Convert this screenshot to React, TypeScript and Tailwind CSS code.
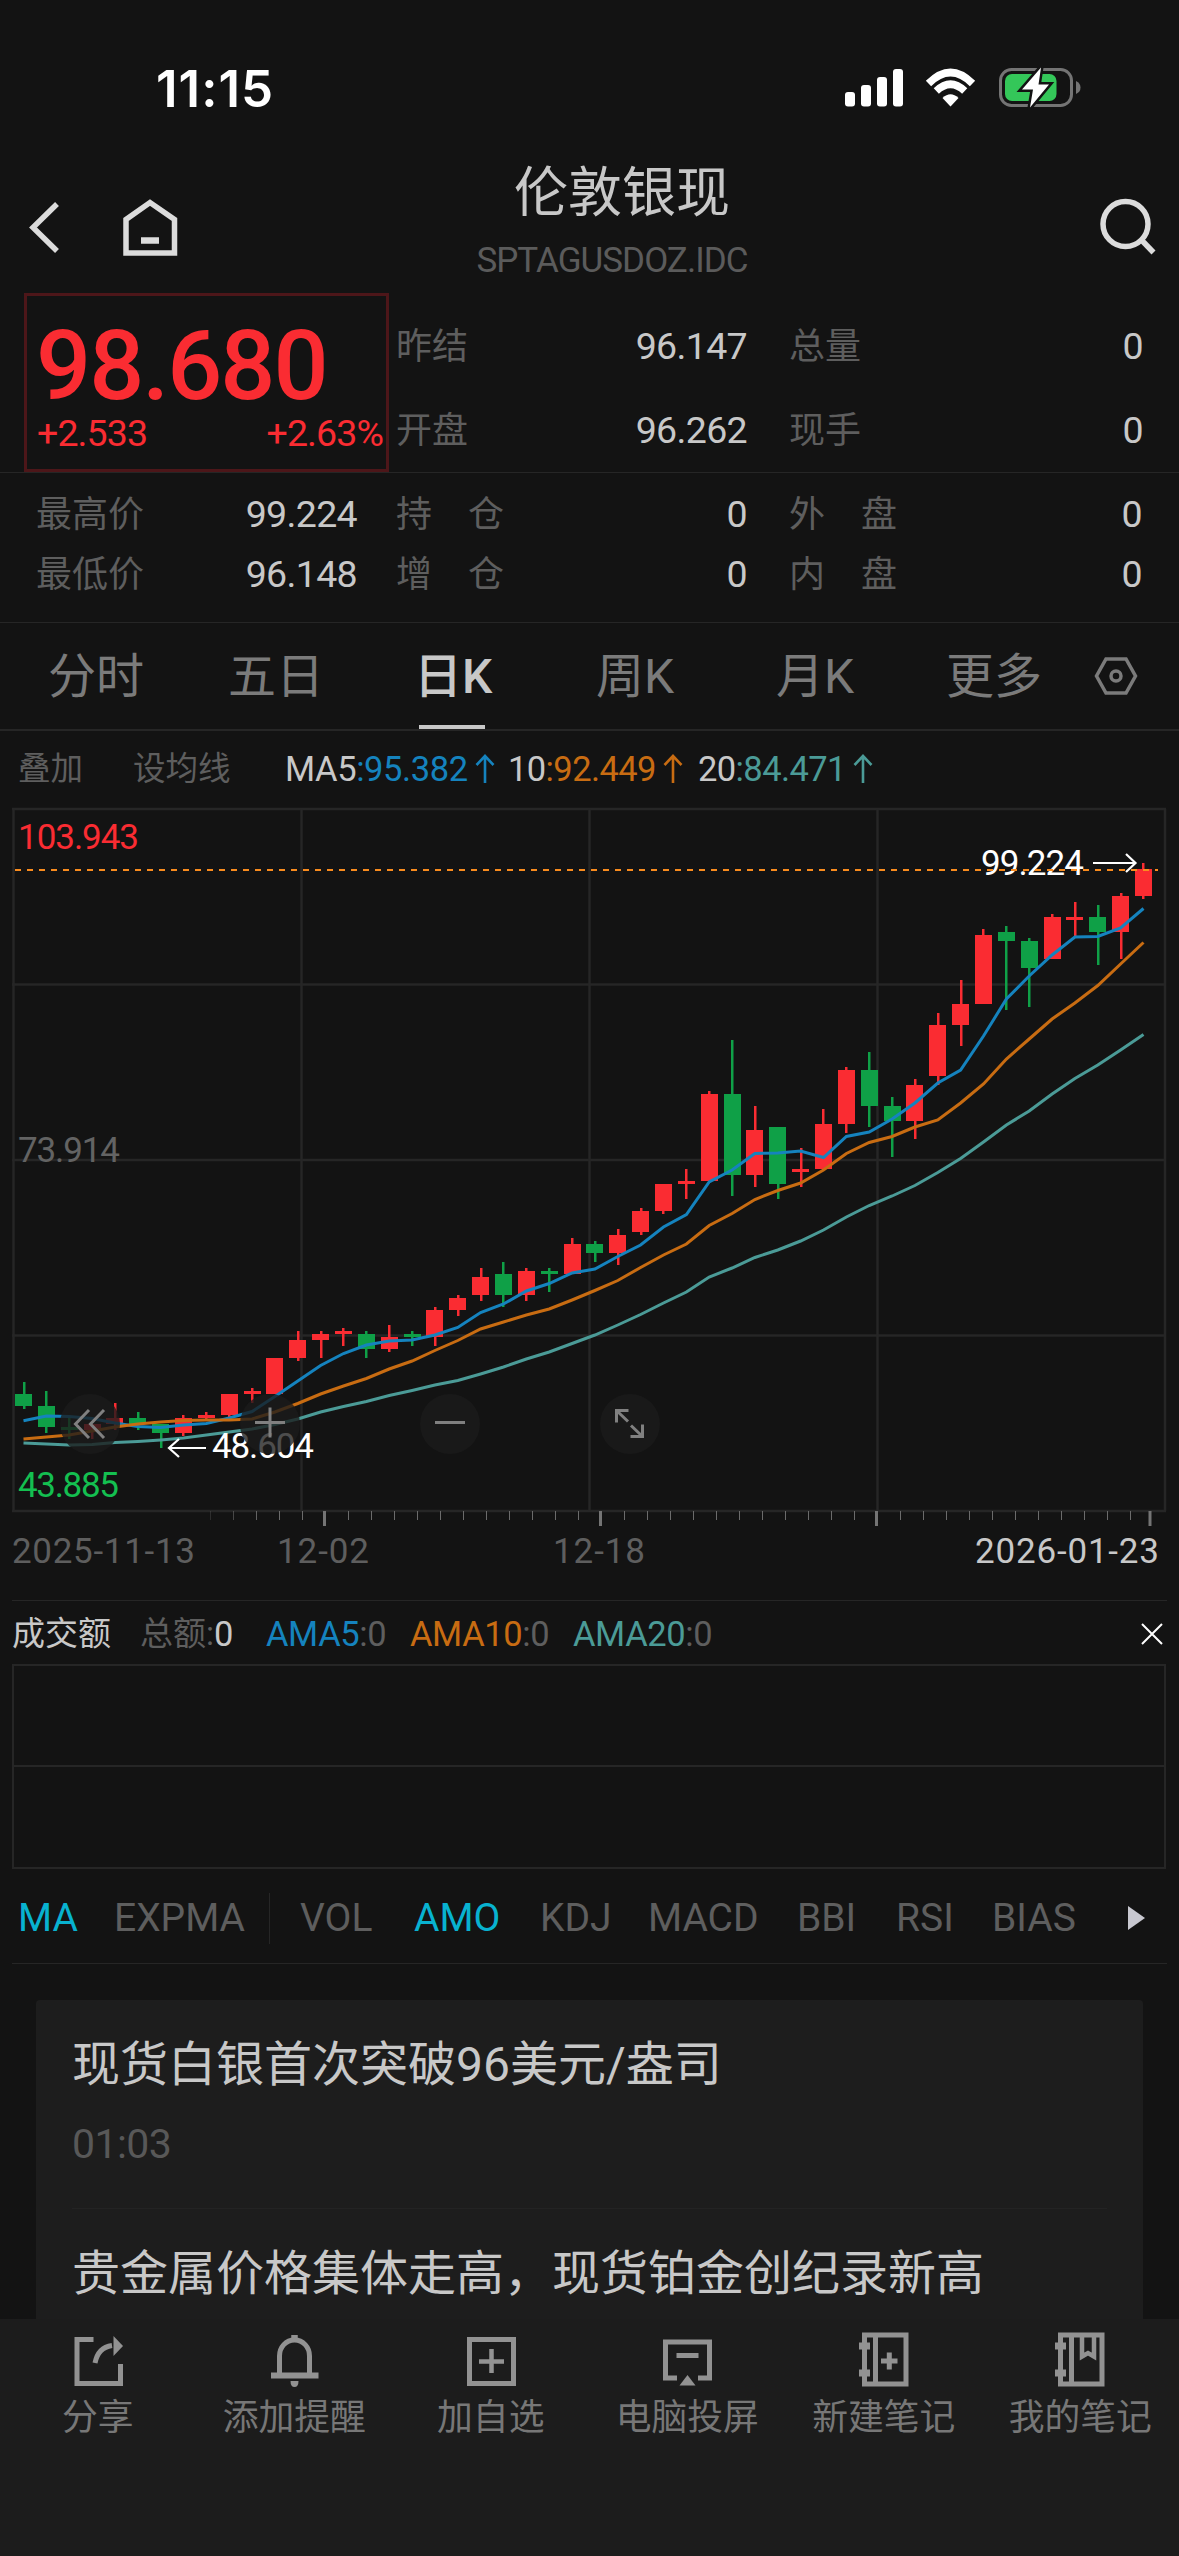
import React from "react";

type Candle = [dir: 0 | 1, top: number, bottom: number, high: number, low: number];

// Each entry: 1 = rising / 0 = falling, body top, body bottom, wick top, wick bottom
const candles: Candle[] = [
  [0, 1394, 1406, 1382, 1409],
  [0, 1406, 1427, 1391, 1433],
  [0, 1427, 1430, 1418, 1439],
  [1, 1424, 1430, 1424, 1439],
  [1, 1418, 1424, 1403, 1430],
  [0, 1418, 1424, 1412, 1430],
  [0, 1424, 1433, 1424, 1448],
  [1, 1418, 1433, 1415, 1436],
  [1, 1415, 1418, 1412, 1419],
  [1, 1394, 1415, 1394, 1418],
  [1, 1391, 1394, 1388, 1403],
  [1, 1358, 1394, 1358, 1394],
  [1, 1340, 1358, 1331, 1361],
  [1, 1334, 1340, 1331, 1358],
  [1, 1331, 1334, 1328, 1346],
  [0, 1334, 1349, 1331, 1358],
  [1, 1337, 1349, 1325, 1352],
  [0, 1334, 1337, 1331, 1346],
  [1, 1310, 1337, 1307, 1346],
  [1, 1298, 1310, 1295, 1316],
  [1, 1277, 1295, 1268, 1301],
  [0, 1274, 1295, 1262, 1307],
  [1, 1271, 1295, 1268, 1301],
  [0, 1271, 1274, 1268, 1292],
  [1, 1244, 1274, 1238, 1274],
  [0, 1244, 1253, 1241, 1262],
  [1, 1235, 1253, 1229, 1265],
  [1, 1211, 1232, 1208, 1235],
  [1, 1184, 1211, 1184, 1214],
  [1, 1181, 1184, 1169, 1199],
  [1, 1094, 1181, 1091, 1181],
  [0, 1094, 1175, 1040, 1196],
  [1, 1130, 1175, 1106, 1187],
  [0, 1127, 1184, 1127, 1199],
  [1, 1169, 1172, 1148, 1187],
  [1, 1124, 1169, 1109, 1169],
  [1, 1070, 1124, 1067, 1133],
  [0, 1070, 1106, 1052, 1127],
  [0, 1106, 1121, 1097, 1157],
  [1, 1085, 1121, 1079, 1139],
  [1, 1025, 1076, 1013, 1085],
  [1, 1004, 1025, 980, 1046],
  [1, 935, 1004, 929, 1004],
  [0, 932, 941, 926, 1010],
  [0, 941, 968, 938, 1007],
  [1, 917, 959, 914, 959],
  [1, 917, 920, 902, 936],
  [0, 917, 932, 905, 965],
  [1, 896, 932, 893, 959],
  [1, 869, 896, 863, 899],
];

const ma5 = [
  1420.7, 1416, 1416.5, 1418.5, 1423, 1426.5, 1427.5, 1425, 1423.5, 1418, 1411.5, 1396.5, 1381, 1365.5, 1353.5, 1345,
  1341, 1340, 1335, 1327.5, 1312.5, 1304, 1291, 1283.5, 1273, 1269, 1256.5, 1245, 1227, 1214.5, 1182, 1170, 1153.5,
  1153, 1151, 1157.5, 1136.5, 1132, 1119, 1103, 1083, 1070, 1036, 999, 976, 955, 937, 936.5, 928, 908.5,
];
const ma10 = [
  1439, 1437, 1435, 1431, 1427, 1424, 1422, 1420.5, 1420, 1420, 1419, 1412, 1403.5, 1394, 1386, 1378.5, 1369, 1361,
  1350.5, 1340.5, 1329, 1322, 1315, 1309, 1300, 1290.5, 1280.5, 1267.5, 1255, 1244, 1225.5, 1213.5, 1199.5, 1190.5,
  1183, 1170, 1153.5, 1142.5, 1136.5, 1127, 1120, 1103, 1084, 1059, 1039, 1019, 1003, 985.5, 964, 942.5,
];
const ma20 = [
  1443, 1444, 1445, 1444.5, 1442.5, 1441.5, 1440, 1438, 1435, 1432, 1429, 1424.5, 1419, 1412, 1406.5, 1401.5, 1395.5,
  1390.5, 1385, 1380.5, 1374, 1367, 1359, 1352, 1343.5, 1335, 1325, 1314.5, 1303, 1292, 1277, 1268, 1257.5, 1250,
  1241, 1230, 1217, 1205.5, 1196, 1185.5, 1172.5, 1158.5, 1142, 1125, 1111, 1094, 1078.5, 1065, 1050, 1034.5,
];

const cx = (i: number) => 23.5 + i * 22.857;
const line = (ys: number[]) => ys.map((y, i) => `${cx(i).toFixed(1)},${y}`).join(" ");

const RED = "#fa2c32";
const GREEN = "#0fa047";

function StatusBar() {
  return (
    <div className="flex h-[150px] items-start justify-between pl-[156px] pr-[98px] pt-[60px]">
      <div className="font-['Inter'] text-[51px] font-semibold leading-[58px] tracking-[1px] text-white">11:15</div>
      <svg className="mt-[6px]" width="238" height="44" viewBox="844 66 238 44">
        <g fill="#fff">
          <rect x="846" y="92" width="10" height="14.5" rx="3" />
          <rect x="862" y="85" width="10" height="21.5" rx="3" />
          <rect x="878" y="77" width="10" height="29.5" rx="3" />
          <rect x="894" y="69" width="10" height="37.5" rx="3" />
          <path d="M951.500 106.500 L943.500 98 Q951.500 90.500 959.500 98 Z" />
        </g>
        <g fill="none" stroke="#fff" strokeWidth="7.500">
          <path d="M929.500 83.500 Q951.500 61.500 973.500 83.500" />
          <path d="M937.300 91 Q951.500 77.500 965.700 91" />
        </g>
        <rect x="1001.500" y="69.500" width="71" height="36" rx="11" fill="none" stroke="#747474" strokeWidth="3" />
        <path d="M1077 81 Q1081.500 83 1081.500 87.500 Q1081.500 92 1077 94 Z" fill="#747474" />
        <rect x="1006" y="74" width="51.500" height="27" rx="7" fill="#34c759" />
        <path
          d="M1042 67.500 L1023 89.500 H1034 L1031 107.500 L1050 84.500 H1039.500 Z"
          fill="#fff"
          stroke="#131313"
          strokeWidth="5"
          paintOrder="stroke"
        />
      </svg>
    </div>
  );
}

function Header() {
  return (
    <header className="flex h-[143px] items-start justify-between pl-[24px] pr-[22px]">
      <div className="flex w-[374px] pt-[46px]">
        <svg width="160" height="64" viewBox="24 196 160 64" fill="none" stroke="#dcdcdc">
          <path d="M57 204 L33 227.500 L57 251" strokeWidth="5.500" />
          <path d="M126 253 V219.500 L150 202.500 L174.500 219.500 V253 Z" strokeWidth="5.500" />
          <path d="M141 240.500 H159" strokeWidth="6.500" />
        </svg>
      </div>
      <div className="flex flex-col items-center">
        <h1 className="mt-[13px] pl-[19px] text-[54px] leading-[62px] text-[#c8c8c8]">伦敦银现</h1>
        <p className="mt-[16px] pr-px text-[35px] leading-[40px] tracking-[-0.95px] text-[#5b5b5b]">SPTAGUSDOZ.IDC</p>
      </div>
      <div className="flex w-[330px] justify-end pt-[46px]">
        <svg width="60" height="64" viewBox="1097 196 60 64" fill="none" stroke="#dcdcdc" strokeWidth="5.500">
          <circle cx="1125.500" cy="224" r="22.500" />
          <path d="M1141.500 240 L1153.500 252.500" />
        </svg>
      </div>
    </header>
  );
}

function Pair({ label, value }: { label: string; value: string }) {
  return (
    <>
      <span className="whitespace-pre pt-px text-[#5e5e5e]">{label}</span>
      <span className="text-right text-[37.5px] tracking-[-0.65px] text-[#c8c8c8]">{value}</span>
    </>
  );
}

function Quote() {
  return (
    <section className="text-[36px] leading-[60px]">
      <div className="flex h-[180px] border-b border-[#262626] pl-[24px]">
        <div className="flex h-[179px] w-[365px] flex-col border-[3px] border-[#4d1619] pl-[9px] pr-[3px] text-[#fa2c32]">
          <div className="mt-[30px] text-[97px] font-medium leading-[80px] tracking-[-2px]">98.680</div>
          <div className="mt-[3px] flex justify-between pl-px text-[37.5px] leading-[48px] tracking-[-0.9px]">
            <span>+2.533</span>
            <span>+2.63%</span>
          </div>
        </div>
        <div className="ml-[7px] grid h-[179px] grid-cols-[110px_241px_42px_110px_244px] grid-rows-[84px_84px] content-start items-center pt-[11px]">
          <Pair label="昨结" value="96.147" />
          <span />
          <Pair label="总量" value="0" />
          <Pair label="开盘" value="96.262" />
          <span />
          <Pair label="现手" value="0" />
        </div>
      </div>
      <div className="grid h-[150px] grid-cols-[120px_201px_39px_120px_231px_42px_120px_233px] grid-rows-[60px_60px] border-b border-[#262626] pl-[36px] pt-[11px]">
        <Pair label="最高价" value="99.224" />
        <span />
        <Pair label="持　仓" value="0" />
        <span />
        <Pair label="外　盘" value="0" />
        <Pair label="最低价" value="96.148" />
        <span />
        <Pair label="增　仓" value="0" />
        <span />
        <Pair label="内　盘" value="0" />
      </div>
    </section>
  );
}

function Tabs() {
  return (
    <nav className="flex h-[108px] items-center border-b-[2px] border-[#262626] pl-[48px] text-[48px] leading-[106px] text-[#7b7b7b]">
      <span className="w-[180px] pt-[2px]">分时</span>
      <span className="w-[186px] pt-[2px]">五日</span>
      <span className="relative w-[182px] pt-[2px] font-medium text-[#c8c8c8]">
        日K
        <i className="absolute bottom-px left-[5px] h-[4px] w-[66px] bg-[#c8c8c8]" />
      </span>
      <span className="w-[180px] pt-[2px]">周K</span>
      <span className="w-[170px] pt-[2px]">月K</span>
      <span className="w-[148px] pt-[2px]">更多</span>
      <svg width="44" height="42" viewBox="1094 655 44 42" fill="none" stroke="#7b7b7b" strokeWidth="3.500">
        <path d="M1106 659 H1126 L1135.500 676 L1126 693 H1106 L1096.500 676 Z" />
        <circle cx="1116" cy="676" r="5" />
      </svg>
    </nav>
  );
}

function UpArrow({ color }: { color: string }) {
  return (
    <svg width="20" height="30" viewBox="0 0 20 30" fill="none" stroke={color} strokeWidth="2.600">
      <path d="M10 29 V2 M1.500 11 L10 2 L18.500 11" />
    </svg>
  );
}

function MaItem({ label, value, color }: { label: string; value: string; color: string }) {
  return (
    <span className="flex items-center">
      <span className="text-[#c8c8c8]">{label}</span>
      <span style={{ color }}>:{value}</span>
      <span className="ml-[7px]">
        <UpArrow color={color} />
      </span>
    </span>
  );
}

function MaRow() {
  return (
    <div className="flex h-[69px] items-center pl-[18px] pt-[6px] text-[34.5px] leading-[40px] tracking-[-0.6px]">
      <span className="w-[115px] text-[32.500px] tracking-normal text-[#5e5e5e]">叠加</span>
      <span className="w-[152px] text-[32.500px] tracking-normal text-[#5e5e5e]">设均线</span>
      <span className="w-[223px] tracking-[-0.4px]">
        <MaItem label="MA5" value="95.382" color="#1583be" />
      </span>
      <span className="w-[190px]">
        <MaItem label="10" value="92.449" color="#c86c12" />
      </span>
      <span>
        <MaItem label="20" value="84.471" color="#4b9b97" />
      </span>
    </div>
  );
}

function ChartText(props: { x: number; y: number; w: number; fill: string; children: string }) {
  return (
    <text x={props.x} y={props.y} textLength={props.w} fill={props.fill} fontSize="35">
      {props.children}
    </text>
  );
}

function KChart() {
  const ticks = Array.from({ length: 41 }, (_, i) => 209.5 + i * 23);
  const majors = [324.5, 600.5, 876.5, 1150];
  return (
    <svg className="block" width="1179" height="800" viewBox="0 800 1179 800">
      <g stroke="#262626" strokeWidth="2.500" fill="none">
        <path d="M12 809 H1166 M12 984.500 H1166 M12 1160 H1166 M12 1335.500 H1166 M12 1511 H1166" />
        <path d="M13.500 809 V1511 M301.500 809 V1511 M589.500 809 V1511 M877.500 809 V1511 M1165 809 V1511" />
      </g>

      {ticks.map((x, i) =>
        majors.some((m) => Math.abs(m - x) < 5) ? null : (
          <rect key={i} x={Math.round(x)} y="1511" width="1" height="9" fill="#6b6b6b" opacity={i < 3 ? 0.3 + i * 0.3 : 1} />
        ),
      )}
      {majors.map((x) => (
        <rect key={x} x={x - 1.5} y="1511" width="3" height="15" fill="#747474" />
      ))}

      <ChartText x={18} y={848.5} w={121} fill={RED}>103.943</ChartText>
      <ChartText x={18} y={1161.5} w={102} fill="#636363">73.914</ChartText>
      <ChartText x={18} y={1497} w={101} fill="#14bf50">43.885</ChartText>

      {candles.map(([up, top, bottom, high, low], i) => (
        <g key={i} fill={up ? RED : GREEN}>
          <rect x={Math.round(cx(i) - 1)} y={high} width="2.500" height={low - high} />
          <rect x={Math.round(cx(i) - 8.5)} y={top} width="17" height={bottom - top} />
        </g>
      ))}

      <g fill="none" strokeWidth="3">
        <polyline points={line(ma20)} stroke="#4b9b97" />
        <polyline points={line(ma5)} stroke="#1583be" />
        <polyline points={line(ma10)} stroke="#c86c12" />
      </g>

      <ChartText x={981} y={875} w={103} fill="#fff">99.224</ChartText>
      <path d="M1093 863 H1135 M1126 854 L1135.500 863 L1126 872" fill="none" stroke="#fff" strokeWidth="2.200" />
      <path d="M15 870 H1158" stroke="#fa8c1e" strokeWidth="2" strokeDasharray="6 6" />
      <ChartText x={212} y={1458} w={102} fill="#fff">48.604</ChartText>
      <path d="M206 1448 H169 M179 1439 L169 1448 L179 1457" fill="none" stroke="#fff" strokeWidth="2.200" />

      <g fill="#1b1b1b" fillOpacity="0.78">
        <circle cx="90" cy="1424" r="30" />
        <circle cx="270" cy="1424" r="30" />
        <circle cx="450" cy="1424" r="30" />
        <circle cx="630" cy="1424" r="30" />
      </g>
      <g fill="none" stroke="#808080" strokeWidth="3">
        <path d="M89 1410 L75.500 1424 L89 1438 M104 1410 L90.500 1424 L104 1438" />
        <path d="M255 1422.500 H285 M270 1407.500 V1437.500" />
        <path d="M435 1422.500 H465" />
        <path d="M628.500 1410.500 H616.500 V1422.500 M616.500 1410.500 L628 1421.500 M630.500 1436.500 H642.500 V1424.500 M642.500 1436.500 L631 1425.500" />
      </g>

      <ChartText x={12} y={1563} w={183} fill="#5e5e5e">2025-11-13</ChartText>
      <ChartText x={277} y={1563} w={92} fill="#5e5e5e">12-02</ChartText>
      <ChartText x={553} y={1563} w={92} fill="#5e5e5e">12-18</ChartText>
      <ChartText x={975} y={1563} w={184} fill="#c8c8c8">2026-01-23</ChartText>
    </svg>
  );
}

function AmountPanel() {
  return (
    <section className="px-[12px]">
      <div className="flex h-[64px] items-center border-t border-[#262626] pt-[3px] text-[34.5px] leading-[40px] tracking-[-0.4px] text-[#5e5e5e]">
        <span className="w-[128px] text-[33px] tracking-normal text-[#c8c8c8]">成交额</span>
        <span className="flex w-[126px]">
          <span className="text-[33px] tracking-normal">总额:</span>
          <span className="text-[#c8c8c8]">0</span>
        </span>
        <span className="w-[144px]">
          <span className="text-[#1583be]">AMA5</span>:0
        </span>
        <span className="w-[163px]">
          <span className="text-[#c86c12]">AMA10</span>:0
        </span>
        <span>
          <span className="text-[#4b9b97]">AMA20</span>:0
        </span>
        <svg className="ml-auto mr-[4px]" width="22" height="22" viewBox="0 0 22 22" stroke="#fff" strokeWidth="2">
          <path d="M1 1 L21 21 M21 1 L1 21" />
        </svg>
      </div>
      <div className="mr-px flex h-[205px] flex-col border-2 border-[#262626]">
        <div className="h-[101px] border-b-2 border-[#262626]" />
      </div>
    </section>
  );
}

const indicators: { name: string; box: string }[] = [
  { name: "MA", box: "w-[96px] text-[#08b2d0]" },
  { name: "EXPMA", box: "w-[155px]" },
  { name: "VOL", box: "w-[114px]" },
  { name: "AMO", box: "w-[126px] text-[#08b2d0]" },
  { name: "KDJ", box: "w-[108px]" },
  { name: "MACD", box: "w-[149px]" },
  { name: "BBI", box: "w-[99px]" },
  { name: "RSI", box: "w-[96px]" },
  { name: "BIAS", box: "w-[135px]" },
];

function Indicators() {
  return (
    <div className="mx-[12px] flex h-[95px] items-center border-b border-[#262626] pl-[6px] pt-[4px] text-[39px] leading-[44px] text-[#5e5e5e]">
      {indicators.map((it) => (
        <React.Fragment key={it.name}>
          <span className={it.box}>{it.name}</span>
          {it.name === "EXPMA" && <i className="mr-[30px] h-[51px] w-px bg-[#262626]" />}
        </React.Fragment>
      ))}
      <svg width="18" height="24" viewBox="0 0 18 24" fill="#c8c8d0">
        <path d="M1 0 L18 12 L1 24 Z" />
      </svg>
    </div>
  );
}

function News() {
  return (
    <section className="mx-[36px] mt-[36px] h-[319px] overflow-hidden rounded-t-[4px] bg-[#1d1d1d] px-[36px] text-[#c8c8c8]">
      <h2 className="pt-[34px] text-[48px] leading-[62px]">现货白银首次突破96美元/盎司</h2>
      <p className="mt-[24px] text-[41px] leading-[48px] tracking-[-0.6px] text-[#585858]">01:03</p>
      <div className="mt-[40px] h-px bg-[#232323]" />
      <h2 className="mt-[34px] whitespace-nowrap text-[48px] leading-[62px]">贵金属价格集体走高，现货铂金创纪录新高</h2>
    </section>
  );
}

const notebook = (
  <>
    <path d="M8.500 3 H50 V52 H8.500 Z M19.500 3 V52" strokeWidth="5" />
    <path d="M3 14 H14 M3 41 H14" strokeWidth="7" />
  </>
);

const actions: { label: string; icon: React.ReactNode }[] = [
  {
    label: "分享",
    icon: (
      <>
        <path d="M23.500 7.500 H7 V51.500 H50.500 V32" strokeWidth="5" />
        <path d="M25 31 Q28 15.500 42 13.500" strokeWidth="5" />
        <path d="M43.500 4 L53 14 L43.500 24 Z" fill="#929292" stroke="none" />
      </>
    ),
  },
  {
    label: "添加提醒",
    icon: (
      <>
        <path d="M13.500 43 V24 C13.500 15 20 8 28.500 8 C37 8 43.500 15 43.500 24 V43" strokeWidth="5" />
        <path d="M5 43.500 H52.500" strokeWidth="6" />
        <path d="M28.500 3 V9" strokeWidth="6.500" />
        <path d="M24.500 49 H32.500 Q32.500 55 28.500 55 Q24.500 55 24.500 49 Z" fill="#929292" stroke="none" />
      </>
    ),
  },
  {
    label: "加自选",
    icon: (
      <>
        <path d="M6.500 7.500 H50.500 V51.500 H6.500 Z" strokeWidth="5" />
        <path d="M16 29.500 H41 M28.500 17 V41" strokeWidth="4.500" />
      </>
    ),
  },
  {
    label: "电脑投屏",
    icon: (
      <>
        <path d="M18 46 H6.500 V10 H50.500 V46 H39" strokeWidth="5" />
        <path d="M17.500 23.500 H39.500" strokeWidth="5" />
        <path d="M20.500 53.500 L28.500 43 L36.500 53.500 Z" fill="#929292" stroke="none" />
      </>
    ),
  },
  {
    label: "新建笔记",
    icon: (
      <>
        {notebook}
        <path d="M25 29 H41.500 M33.300 20.500 V37.500" strokeWidth="5" />
      </>
    ),
  },
  {
    label: "我的笔记",
    icon: (
      <>
        {notebook}
        <path d="M30 4 V24.500 L36 21 L42 24.500 V4" strokeWidth="4.500" />
      </>
    ),
  },
];

function BottomBar() {
  return (
    <footer className="grid h-[237px] grid-cols-6 bg-[#1c1c1c] pt-[13px]">
      {actions.map((a) => (
        <div key={a.label} className="flex flex-col items-center">
          <svg className="ml-px" width="58" height="60" viewBox="0 0 58 60" fill="none" stroke="#929292">
            {a.icon}
          </svg>
          <span className="mt-px whitespace-nowrap pr-px text-[35.800px] leading-[50px] text-[#777]">{a.label}</span>
        </div>
      ))}
    </footer>
  );
}

export default function App() {
  return (
    <div className="h-[2556px] w-[1179px] overflow-hidden bg-[#131313] font-['Roboto','Noto_Sans_CJK_SC',sans-serif]">
      <StatusBar />
      <Header />
      <Quote />
      <Tabs />
      <MaRow />
      <KChart />
      <AmountPanel />
      <Indicators />
      <News />
      <BottomBar />
    </div>
  );
}
